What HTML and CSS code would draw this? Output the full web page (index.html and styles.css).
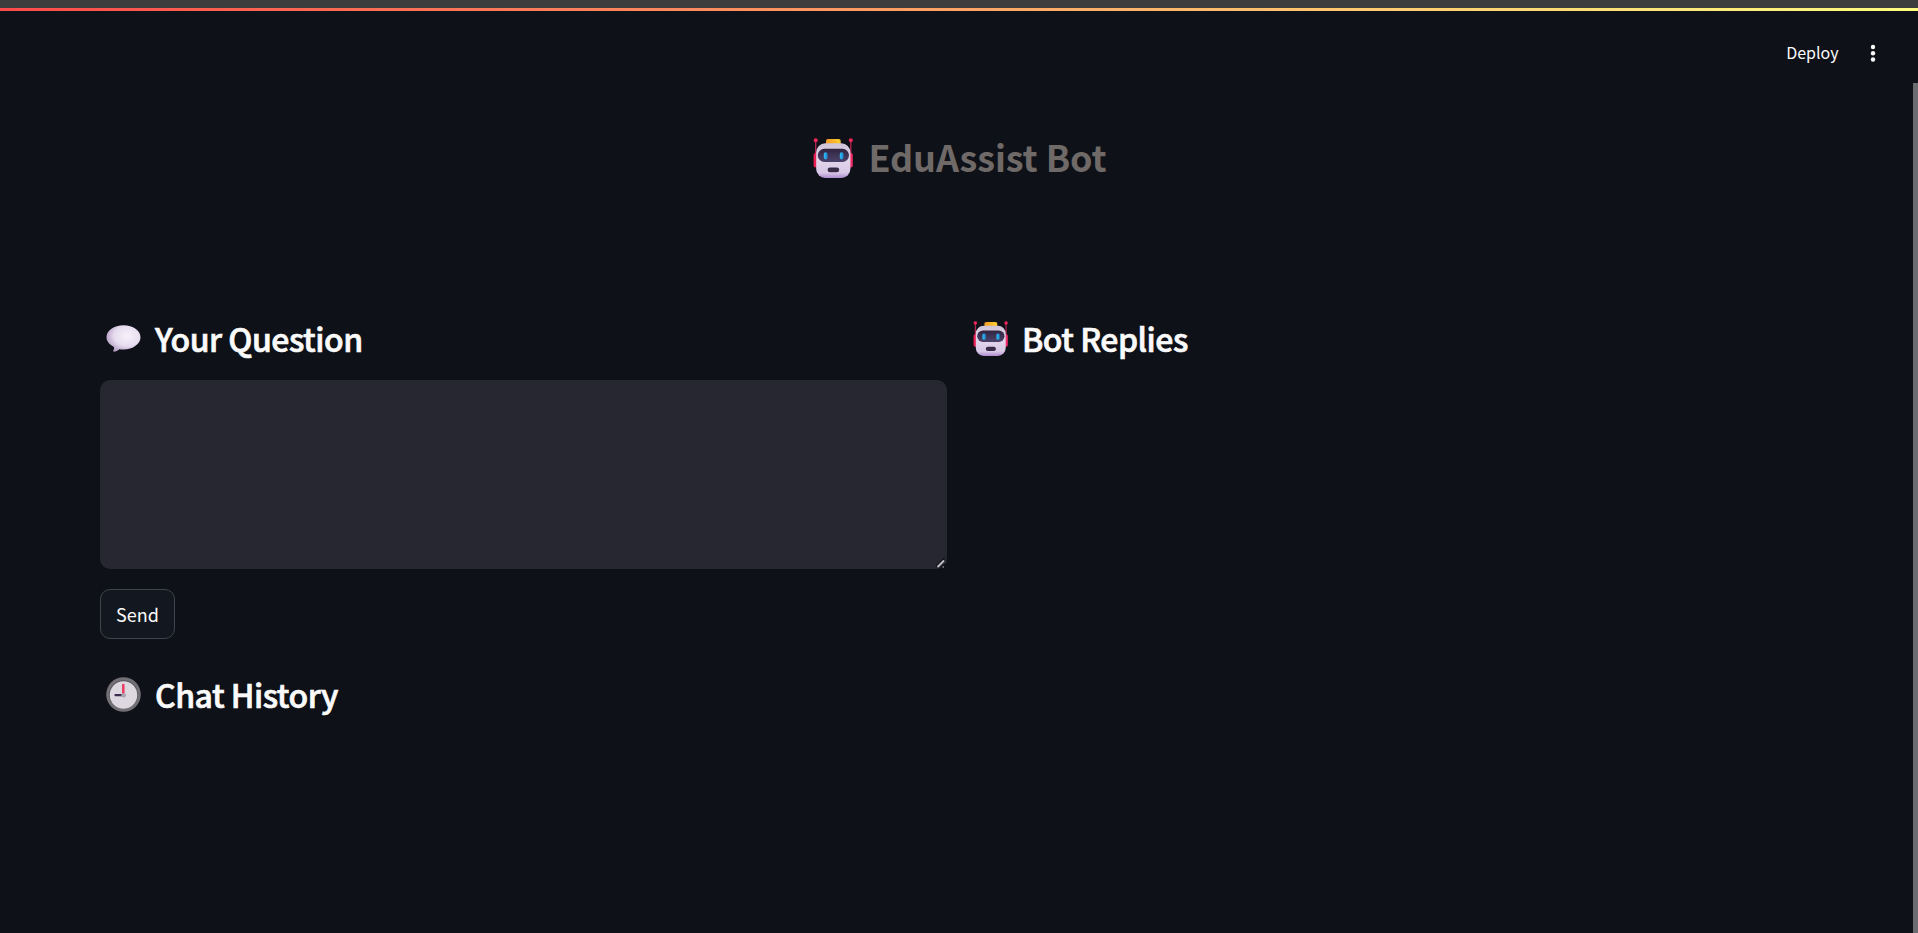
FILE: index.html
```html
<!DOCTYPE html>
<html lang="en">
<head>
<meta charset="utf-8">
<title>EduAssist Bot</title>
<link rel="stylesheet" href="styles.css">
</head>
<body>
<svg class="defs" width="0" height="0" aria-hidden="true">
  <defs>
    <linearGradient id="head" x1="0" y1="0" x2="0" y2="1"><stop offset="0" stop-color="#cfc3d8"/><stop offset=".5" stop-color="#e2d5ea"/><stop offset=".85" stop-color="#d8c8e6"/><stop offset="1" stop-color="#b08cd0"/></linearGradient>
    <linearGradient id="visor" x1="0" y1="0" x2="0" y2="1"><stop offset="0" stop-color="#302440"/><stop offset="1" stop-color="#4c436b"/></linearGradient>
    <linearGradient id="hat"><stop offset="0" stop-color="#f09a25"/><stop offset="1" stop-color="#ffd02e"/></linearGradient>
    <linearGradient id="eye"><stop offset="0" stop-color="#2cc0fa"/><stop offset="1" stop-color="#2484cc"/></linearGradient>
    <radialGradient id="bubble" cx=".62" cy=".4" r=".65"><stop offset="0" stop-color="#f7f2fa"/><stop offset=".6" stop-color="#e6dcef"/><stop offset="1" stop-color="#b6a0c6"/></radialGradient>
    <symbol id="robot" viewBox="0 0 40 40">
      <path d="M2.7 2v16M37.8 2v16" stroke="#b92453" stroke-width="1.3"/>
      <circle cx="2.7" cy="2.2" r="2" fill="#f0275a"/><circle cx="37.8" cy="2.2" r="2" fill="#f0275a"/>
      <rect x=".6" y="15" width="5" height="14.5" rx="2" fill="#e91e54"/><rect x="35" y="15" width="4.8" height="14.5" rx="2" fill="#f02b66"/>
      <rect x="13" y="1" width="14.7" height="7" rx="2" fill="url(#hat)"/>
      <rect x="3.2" y="5.3" width="34.2" height="34.6" rx="9" fill="url(#head)"/>
      <rect x="4.8" y="10.8" width="31.2" height="13.2" rx="6.6" fill="url(#visor)"/>
      <rect x="10.8" y="14.2" width="3.7" height="7.2" rx="1.8" fill="url(#eye)"/><rect x="26.8" y="14.2" width="3.7" height="7.2" rx="1.8" fill="url(#eye)"/>
      <rect x="14.6" y="29.5" width="11.6" height="4.8" rx="2.4" fill="#382b48"/>
    </symbol>
  </defs>
</svg>
<div class="window-edge"></div>
<div class="decoration"></div>
<header class="toolbar">
  <span class="deploy">Deploy</span>
  <svg class="menu" viewBox="0 0 6 18"><circle cx="3" cy="3" r="2.2"/><circle cx="3" cy="9.2" r="2.2"/><circle cx="3" cy="15.5" r="2.2"/></svg>
</header>
<div class="scroll">
  <main class="content">
    <h1 class="title"><svg class="title-icon"><use href="#robot"/></svg><span>EduAssist Bot</span></h1>
    <div class="columns">
      <section>
        <h2 class="heading"><svg class="heading-icon bubble" viewBox="0 0 34 27"><path d="M17 .3C26.5.3 34 5.6 34 12.2S26.500 24.500 17 24.500q-2.200 0-4.200-.3c-1.700 1.500-3.500 2.400-5.300 2.400-1 0-1.100-.8-.6-1.300.8-1 .8-2.300.3-3.600C2.600 19.300 0 16 0 12.200 0 5.600 7.500.3 17 .3z" fill="url(#bubble)"/></svg><span>Your Question</span></h2>
        <div class="field">
          <textarea class="question" aria-label="Your question"></textarea>
          <svg class="grip" viewBox="0 0 12 12"><path d="M1 9.500 9.500 1M6 11l4-4" stroke="#0e1117" stroke-width="1.500"/><path d="M2.500 10 9 3.500" stroke="#c4c4c8" stroke-width="1.800"/><path d="M7.500 10h1.500" stroke="#c4c4c8"/></svg>
        </div>
        <button class="send" type="button">Send</button>
        <h2 class="heading history"><svg class="heading-icon" viewBox="0 0 35 35"><circle cx="17.500" cy="17.500" r="17.300" fill="#727075"/><circle cx="17.500" cy="17.500" r="14.300" fill="#59545e"/><circle cx="17.500" cy="18" r="13.700" fill="#ddd8e0"/><path d="M17.300 8v9" stroke="#ee3a63" stroke-width="2.500" stroke-linecap="round"/><path d="M9.500 18.200h7" stroke="#3e2b50" stroke-width="2.200" stroke-linecap="round"/><circle cx="17.700" cy="18.200" r="2.300" fill="#aaa4ae"/></svg><span>Chat History</span></h2>
      </section>
      <section>
        <h2 class="heading"><svg class="heading-icon"><use href="#robot"/></svg><span>Bot Replies</span></h2>
      </section>
    </div>
  </main>
  <div class="scrollbar"></div>
</div>
</body>
</html>
```
FILE: styles.css
```css
* { box-sizing: border-box; }
body {
  margin: 0;
  height: 933px;
  overflow: hidden;
  display: flex;
  flex-direction: column;
  background: #0e1117;
  color: #fafafa;
  font-family: "Noto Sans CJK SC", "Noto Sans", sans-serif;
}
.defs { position: absolute; }
.window-edge { height: 8px; background: #3d3d3d; }
.decoration { height: 3px; background: linear-gradient(90deg, #ff4b4b, #fffd80); }
.toolbar {
  height: 72px;
  padding: 0 42.5px 0 0;
  display: flex;
  justify-content: flex-end;
  align-items: flex-start;
  gap: 31px;
}
.deploy { margin-top: 29px; font-size: 16px; line-height: 24px; }
.menu { width: 6px; height: 18px; margin-top: 33px; fill: #fafafa; }
.scroll { flex: 1; display: flex; }
.content { flex: 1; padding: 43px 95px 0 100px; }
.scrollbar { width: 5px; background: #6b6c70; }
.title {
  margin: 0;
  height: 60px;
  padding-left: 2px;
  display: flex;
  justify-content: center;
  align-items: center;
  gap: 15px;
  color: #6f6a68;
  font-size: 36px;
  line-height: 60px;
  font-weight: 700;
  letter-spacing: -.12px;
}
.title-icon { width: 40px; height: 40px; margin-top: 3px; }
.columns { margin-top: 127px; display: grid; grid-template-columns: 847px 847px; gap: 20px; }
.heading {
  margin: 0;
  height: 48px;
  padding-left: 6px;
  display: flex;
  align-items: center;
  gap: 14px;
  font-size: 32px;
  line-height: 48px;
  font-weight: 500;
  letter-spacing: -.5px;
  -webkit-text-stroke: .7px #fafafa;
}
.heading span { padding-top: 1px; }
.heading-icon { width: 35px; height: 35px; margin-top: 3px; -webkit-text-stroke: 0; }
.bubble { height: 27px; margin-top: 2px; }
.field { position: relative; height: 189px; margin-top: 19px; }
.question {
  display: block;
  width: 100%;
  height: 100%;
  border: 0;
  border-radius: 10px;
  background: #262730;
  color: inherit;
  resize: none;
}
.grip { position: absolute; right: 0; bottom: 0; width: 12px; height: 12px; }
.send {
  display: block;
  width: 75px;
  height: 50px;
  margin-top: 20px;
  padding: 0;
  border: 1px solid #41444c;
  border-radius: 10px;
  background: #131720;
  color: inherit;
  font: 18px/48px "Noto Sans CJK SC", sans-serif;
}
.history { margin-top: 30px; }
```
